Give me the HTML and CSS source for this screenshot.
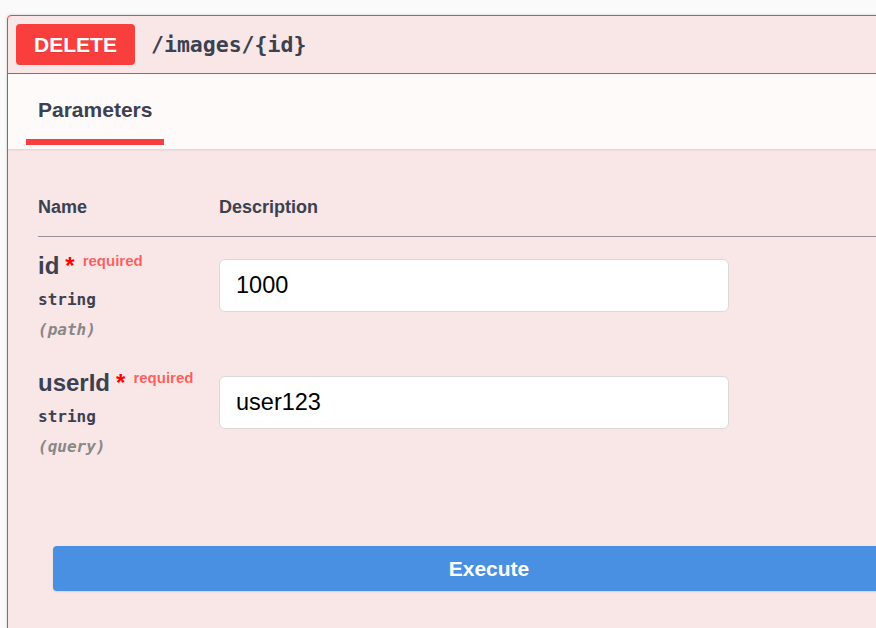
FILE: index.html
```html
<!DOCTYPE html>
<html lang="en">
<head>
<meta charset="utf-8">
<title>DELETE /images/{id}</title>
<link rel="stylesheet" href="styles.css">
</head>
<body>
<div class="page">
  <div class="opblock">
    <div class="summary">
      <span class="method">DELETE</span>
      <span class="path">/images/{id}</span>
    </div>
    <div class="tabs">
      <div class="tab">
        <span class="tab-label">Parameters</span>
        <span class="tab-line"></span>
      </div>
    </div>
    <div class="params-wrap">
      <table class="params">
        <thead>
          <tr>
            <th class="col-name">Name</th>
            <th>Description</th>
          </tr>
        </thead>
        <tbody>
          <tr>
            <td class="cell-name">
              <div class="pname">id<span class="star">*</span><span class="req">required</span></div>
              <div class="ptype">string</div>
              <div class="pin">(path)</div>
            </td>
            <td class="cell-input"><input class="field" type="text" value="1000"></td>
          </tr>
          <tr>
            <td class="cell-name">
              <div class="pname">userId<span class="star">*</span><span class="req">required</span></div>
              <div class="ptype">string</div>
              <div class="pin">(query)</div>
            </td>
            <td class="cell-input"><input class="field" type="text" value="user123"></td>
          </tr>
        </tbody>
      </table>
    </div>
    <div class="execute-wrap">
      <button class="execute" type="button">Execute</button>
    </div>
  </div>
</div>
</body>
</html>
```

FILE: styles.css
```css
html, body {
  margin: 0;
  padding: 0;
}
body {
  background: #fafafa;
  overflow: hidden;
  font-family: "Liberation Sans", Arial, sans-serif;
  color: #3b4151;
}
.page {
  padding: 15px 0 0 7px;
}
.opblock {
  width: 965px;
  min-height: 700px;
  border: 1px solid #f93e3e;
  border-radius: 4px;
  background: rgba(249, 62, 62, 0.1);
  box-shadow: 0 0 3px rgba(0, 0, 0, 0.19);
}
.summary {
  height: 57px;
  display: flex;
  align-items: center;
  padding: 0 8px;
  border-bottom: 1px solid #f93e3e;
}
.method {
  width: 119px;
  height: 41px;
  display: flex;
  align-items: center;
  justify-content: center;
  background: #f93e3e;
  border-radius: 4px;
  color: #fff;
  font-weight: 700;
  font-size: 21px;
  text-shadow: 0 1px 0 rgba(0, 0, 0, 0.1);
}
.path {
  margin-left: 16px;
  font-family: "DejaVu Sans Mono", "Liberation Mono", monospace;
  font-weight: 700;
  font-size: 21.5px;
  color: #3b4151;
}
.tabs {
  height: 75px;
  background: rgba(255, 255, 255, 0.8);
  box-shadow: 0 1px 2px rgba(0, 0, 0, 0.1);
  padding-left: 18px;
  box-sizing: border-box;
  display: flex;
}
.tab {
  display: flex;
  flex-direction: column;
  width: 138px;
  padding-top: 24px;
  box-sizing: border-box;
}
.tab-label {
  padding-left: 12px;
  font-size: 21px;
  line-height: 24px;
  font-weight: 700;
  margin-bottom: 17px;
}
.tab-line {
  height: 6px;
  background: #f93e3e;
}
.params-wrap {
  padding: 0 0 0 30px;
}
.params {
  width: 100%;
  border-collapse: collapse;
}
.params th {
  text-align: left;
  font-size: 18px;
  line-height: 21px;
  font-weight: 700;
  padding: 47.5px 0 18.5px;
  border-bottom: 1px solid rgba(59, 65, 81, 0.3);
}
.col-name {
  width: 181px;
}
.params td {
  vertical-align: top;
  padding: 0;
}
.cell-name {
  padding: 10px 0 9px !important;
}
.pname {
  font-size: 24px;
  line-height: 28px;
  font-weight: 700;
  white-space: nowrap;
}
.star {
  color: #f00;
  margin-left: 6px;
}
.req {
  color: rgba(255, 0, 0, 0.6);
  font-size: 15px;
  vertical-align: 8px;
  margin-left: 8px;
}
.ptype {
  margin-top: 5px;
  font-family: "DejaVu Sans Mono", "Liberation Mono", monospace;
  font-weight: 700;
  font-size: 16px;
  line-height: 30px;
}
.pin {
  font-family: "DejaVu Sans Mono", "Liberation Mono", monospace;
  font-style: italic;
  font-weight: 700;
  font-size: 16px;
  line-height: 30px;
  color: #888;
}
.cell-input {
  padding-top: 22px !important;
}
.field {
  display: block;
  width: 510px;
  height: 53px;
  box-sizing: border-box;
  margin: 0;
  padding: 0 16px;
  border: 1px solid #d9d9d9;
  border-radius: 6px;
  background: #fff;
  font-family: "Liberation Sans", Arial, sans-serif;
  font-size: 23.5px;
  color: #000;
  outline: none;
}
.execute-wrap {
  padding: 75px 0 0 45px;
}
.execute {
  display: block;
  width: 872px;
  height: 45px;
  margin: 0;
  border: none;
  border-radius: 4px;
  background: #4990e2;
  box-shadow: 0 1px 2px rgba(0, 0, 0, 0.1);
  color: #fff;
  font-family: "Liberation Sans", Arial, sans-serif;
  font-size: 21px;
  font-weight: 700;
}
```
